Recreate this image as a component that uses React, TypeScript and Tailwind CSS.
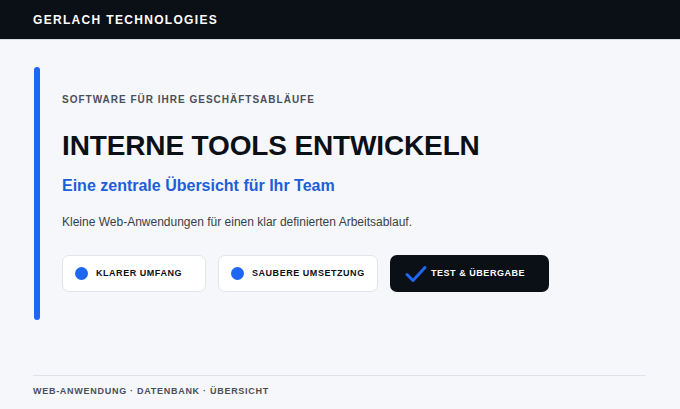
import React from "react";

const font = { fontFamily: '"Liberation Sans", Arial, sans-serif' };

function Dot() {
  return <span className="block h-[13px] w-[13px] shrink-0 rounded-full bg-[#1f66f2]" />;
}

function Check() {
  return (
    <svg width="22" height="18" viewBox="0 0 22 18" className="shrink-0">
      <path d="M2 9.5 L8 15.5 L20 2.5" fill="none" stroke="#1f66f2" strokeWidth="3" strokeLinecap="round" strokeLinejoin="round" />
    </svg>
  );
}

export default function App() {
  return (
    <div className="min-h-[409px] w-[680px] bg-[#f6f7fb] text-[#0b0f16]" style={font}>
      <header className="flex h-[40px] items-center border-b border-[#d9dde5] bg-[#0b0f16] px-[33px]">
        <span className="text-[12px] font-bold tracking-[0.11em] text-white">GERLACH TECHNOLOGIES</span>
      </header>

      <main className="px-[34px] pt-[27px]">
        <section className="flex">
          <div className="h-[253px] w-[6px] shrink-0 rounded-full bg-[#1f66f2]" />
          <div className="pl-[22px] pt-[26px]">
            <p className="text-[10px] font-semibold leading-[14px] tracking-[0.1em] text-[#4a4f58]">
              SOFTWARE FÜR IHRE GESCHÄFTSABLÄUFE
            </p>
            <h1 className="mt-[22px] text-[28px] font-bold leading-[34px] tracking-[-0.005em] text-[#0b0f16]">
              INTERNE TOOLS ENTWICKELN
            </h1>
            <h2 className="mt-[13px] text-[16px] font-bold leading-[20px] text-[#1d5fd8]">
              Eine zentrale Übersicht für Ihr Team
            </h2>
            <p className="mt-[18px] text-[12px] leading-[16px] text-[#3a3f47]">
              Kleine Web-Anwendungen für einen klar definierten Arbeitsablauf.
            </p>
            <div className="mt-[25px] flex gap-[12px]">
              <div className="flex h-[37px] w-[144px] items-center gap-[8px] rounded-[7px] border border-[#e1e4ea] bg-white pl-[12px]">
                <Dot />
                <span className="text-[9px] font-bold tracking-[0.06em]">KLARER UMFANG</span>
              </div>
              <div className="flex h-[37px] w-[160px] items-center gap-[8px] rounded-[7px] border border-[#e1e4ea] bg-white pl-[12px]">
                <Dot />
                <span className="text-[9px] font-bold tracking-[0.06em]">SAUBERE UMSETZUNG</span>
              </div>
              <div className="flex h-[37px] w-[159px] items-center gap-[4px] rounded-[7px] bg-[#0b0f16] pl-[15px]">
                <Check />
                <span className="text-[9px] font-bold tracking-[0.06em] text-white">TEST &amp; ÜBERGABE</span>
              </div>
            </div>
          </div>
        </section>
      </main>

      <footer className="mt-[55px] px-[33px]">
        <div className="mr-[1px] border-t border-[#dfe2e8]" />
        <p className="mt-[9px] text-[9px] font-semibold leading-[12px] tracking-[0.08em] text-[#4a4f58]">
          WEB-ANWENDUNG · DATENBANK · ÜBERSICHT
        </p>
      </footer>
    </div>
  );
}
